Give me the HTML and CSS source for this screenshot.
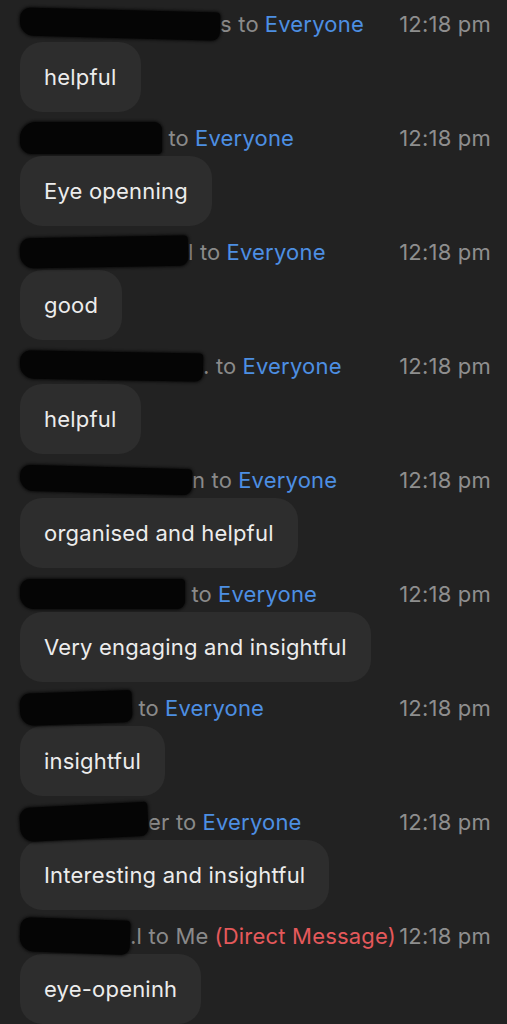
FILE: index.html
```html
<!DOCTYPE html>
<html lang="en">
<head>
  <meta charset="UTF-8">
  <title>Chat</title>
  <link rel="stylesheet" href="styles.css">
</head>
<body>

<div class="chat">

  <div class="msg">
    <div class="meta">
      <span class="from"><span class="redact r1"></span><span class="tail">s</span>&nbsp;to <span class="to">Everyone</span></span>
      <span class="time">12:18 pm</span>
    </div>
    <div class="bubble">helpful</div>
  </div>

  <div class="msg">
    <div class="meta">
      <span class="from"><span class="redact r2"></span>&nbsp;to <span class="to">Everyone</span></span>
      <span class="time">12:18 pm</span>
    </div>
    <div class="bubble">Eye openning</div>
  </div>

  <div class="msg">
    <div class="meta">
      <span class="from"><span class="redact r3"></span><span class="tail">l</span>&nbsp;to <span class="to">Everyone</span></span>
      <span class="time">12:18 pm</span>
    </div>
    <div class="bubble">good</div>
  </div>

  <div class="msg">
    <div class="meta">
      <span class="from"><span class="redact r4"></span><span class="tail">.</span>&nbsp;to <span class="to">Everyone</span></span>
      <span class="time">12:18 pm</span>
    </div>
    <div class="bubble">helpful</div>
  </div>

  <div class="msg">
    <div class="meta">
      <span class="from"><span class="redact r5"></span><span class="tail">n</span>&nbsp;to <span class="to">Everyone</span></span>
      <span class="time">12:18 pm</span>
    </div>
    <div class="bubble">organised and helpful</div>
  </div>

  <div class="msg">
    <div class="meta">
      <span class="from"><span class="redact r6"></span>&nbsp;to <span class="to">Everyone</span></span>
      <span class="time">12:18 pm</span>
    </div>
    <div class="bubble">Very engaging and insightful</div>
  </div>

  <div class="msg">
    <div class="meta">
      <span class="from"><span class="redact r7"></span>&nbsp;to <span class="to">Everyone</span></span>
      <span class="time">12:18 pm</span>
    </div>
    <div class="bubble">insightful</div>
  </div>

  <div class="msg">
    <div class="meta">
      <span class="from"><span class="redact r8"></span><span class="tail">er</span>&nbsp;to <span class="to">Everyone</span></span>
      <span class="time">12:18 pm</span>
    </div>
    <div class="bubble">Interesting and insightful</div>
  </div>

  <div class="msg">
    <div class="meta">
      <span class="from"><span class="redact r9"></span><span class="tail">.l</span>&nbsp;to Me <span class="dm">(Direct Message)</span></span>
      <span class="time">12:18 pm</span>
    </div>
    <div class="bubble">eye-openinh</div>
  </div>

</div>

</body>
</html>
```

FILE: styles.css
```css
html, body {
  margin: 0;
  background-color: #222222;
}
body {
  font-family: Inter, "Noto Sans", sans-serif;
  font-size: 22px;
  letter-spacing: 0.2px;
  color: #ececec;
}
.chat {
  padding: 9px 16px 0 20px;
}
.msg {
  margin-bottom: 11px;
}
.meta {
  display: flex;
  align-items: center;
  height: 30px;
  line-height: 30px;
  color: #8a8a8a;
  white-space: nowrap;
}
.from {
  flex: 1;
  display: flex;
  align-items: center;
}
.to {
  color: #4d8fe3;
  margin-left: 6px;
}
.dm {
  color: #e5595b;
  margin-left: 6px;
}
.time {
  color: #8e8e8e;
}
.redact {
  display: inline-block;
  height: 28px;
  background-color: #050505;
  border-radius: 10px 4px 8px 14px;
  box-shadow: 0 0 3px 1px #0a0a0a;
}
.r1 { width: 200px; transform: rotate(1.5deg); }
.r2 { width: 142px; height: 32px; border-radius: 16px 8px 4px 12px; }
.r3 { width: 168px; height: 30px; transform: rotate(-1deg); }
.r4 { width: 183px; transform: rotate(1deg); }
.r5 { width: 172px; height: 26px; transform: rotate(1.5deg); }
.r6 { width: 165px; height: 30px; }
.r7 { width: 112px; height: 32px; transform: rotate(-2deg); }
.r8 { width: 128px; height: 34px; transform: rotate(-3deg); }
.r9 { width: 110px; height: 34px; transform: rotate(2deg); }
.bubble {
  display: inline-block;
  margin-top: 3px;
  padding: 21px 24px;
  line-height: 28px;
  background-color: #2d2d2d;
  border-radius: 22px;
}
```
